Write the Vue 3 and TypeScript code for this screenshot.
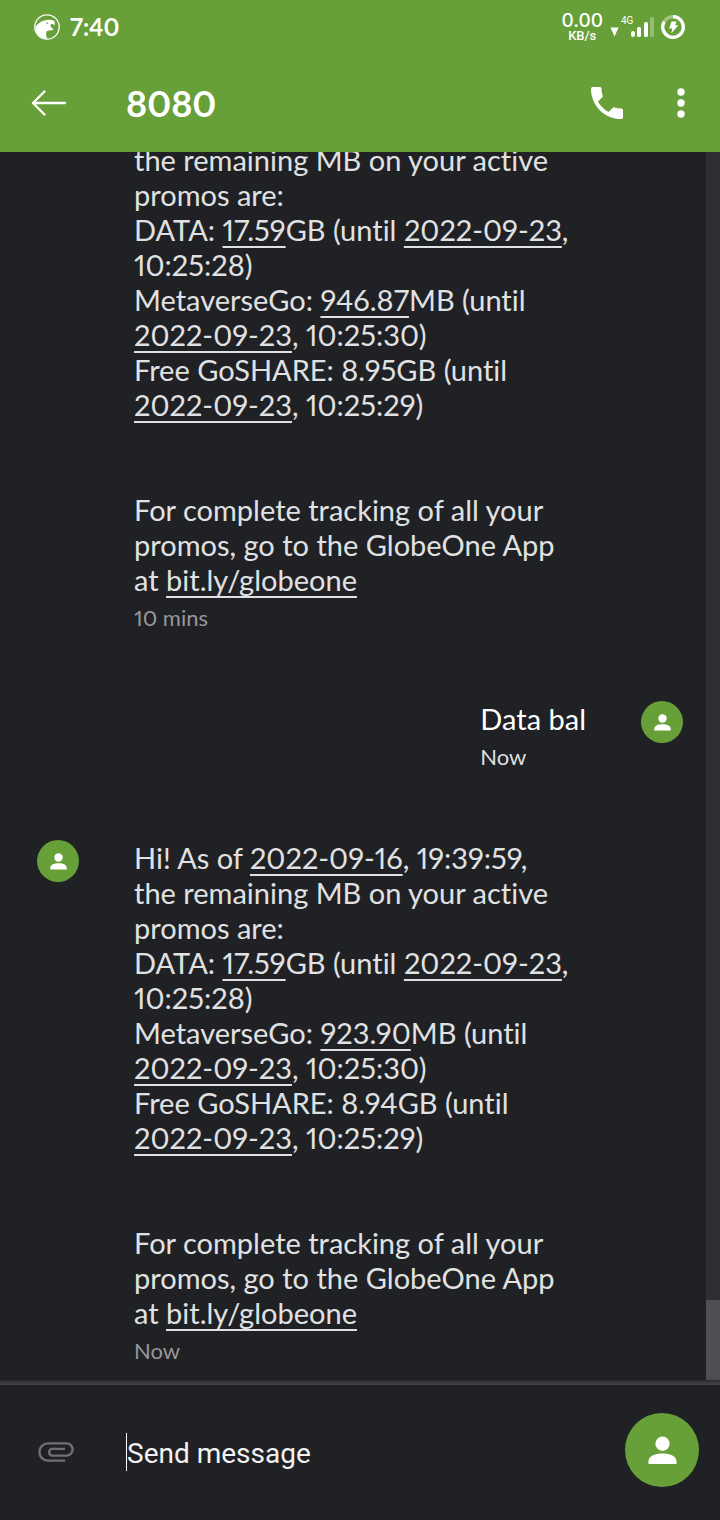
<script setup lang="ts">
import { ref } from 'vue'

interface Part {
  text: string
  href?: string
}
type Line = Part[]
interface Message {
  id: number
  outgoing: boolean
  lines: Line[]
  time: string
}

function balance(clock: string, meta: string, share: string): Line[] {
  const expiry: Part = { text: '2022-09-23', href: '#date' }
  return [
    [{ text: 'Hi! As of ' }, { text: '2022-09-16', href: '#date' }, { text: `, ${clock},` }],
    [{ text: 'the remaining MB on your active' }],
    [{ text: 'promos are:' }],
    [{ text: 'DATA: ' }, { text: '17.59', href: '#number' }, { text: 'GB (until ' }, expiry, { text: ',' }],
    [{ text: '10:25:28)' }],
    [{ text: 'MetaverseGo: ' }, { text: meta, href: '#number' }, { text: 'MB (until' }],
    [expiry, { text: ', 10:25:30)' }],
    [{ text: `Free GoSHARE: ${share}GB (until` }],
    [expiry, { text: ', 10:25:29)' }],
    [],
    [],
    [{ text: 'For complete tracking of all your' }],
    [{ text: 'promos, go to the GlobeOne App' }],
    [{ text: 'at ' }, { text: 'bit.ly/globeone', href: '#link' }],
  ]
}

const messages: Message[] = [
  { id: 1, outgoing: false, lines: balance('19:29:59', '946.87', '8.95'), time: '10 mins' },
  { id: 2, outgoing: true, lines: [[{ text: 'Data bal' }]], time: 'Now' },
  { id: 3, outgoing: false, lines: balance('19:39:59', '923.90', '8.94'), time: 'Now' },
]

const draft = ref('')
</script>

<template>
  <div class="app">
    <header class="header">
      <div class="status">
        <svg class="eagle" viewBox="0 0 26 26" aria-hidden="true">
          <circle cx="13" cy="13" r="12.2" fill="none" stroke="#fff" stroke-width="1.3" />
          <path d="M1.500 13C3 10.500 6 7.500 9.500 6.800C13 5.500 17 5.600 19.500 6.600C21 7.500 21.200 9.500 20.400 11.600C19.700 10.300 18.900 9.900 17.500 9.900L16.200 11.200L17.300 13.600L19.800 15.200L17.300 16.600C15.500 16.500 13.800 16.400 12.600 17.400C11.800 19.500 12 22.500 13.500 25C7 25.500 1.500 20 1.500 13Z" fill="#fff" />
          <path d="M11.500 8.300l3.300.6-1.700 1z" fill="#67a039" />
        </svg>
        <span class="clock">7:40</span>
        <span class="spacer"></span>
        <span class="speed"><b>0.00</b><small>KB/s</small></span>
        <svg class="down" viewBox="0 0 10 10" aria-hidden="true"><path d="M.5 0h9L5 10z" fill="#fff" /></svg>
        <span class="network">
          <span class="generation">4G</span>
          <svg class="signal" viewBox="0 0 24 22" aria-hidden="true">
            <rect x="0" y="15" width="4" height="6" rx="2" fill="#fff" />
            <rect x="6" y="11" width="4" height="10" rx="1.500" fill="#fff" />
            <rect x="13" y="6" width="4" height="15" rx="1.500" fill="#fff" />
            <rect x="19" y="1" width="4" height="20" rx="1.500" fill="#fff" opacity=".3" />
          </svg>
        </span>
        <svg class="battery" viewBox="0 0 24 24" aria-hidden="true">
          <circle cx="12" cy="12" r="10.300" fill="none" stroke="#fff" stroke-opacity=".4" stroke-width="3.200" />
          <path d="M12 1.700A10.300 10.300 0 1 1 3.200 6.700" fill="none" stroke="#fff" stroke-width="3.200" />
          <path d="M10.500 6.500h5.200l-1.600 3.800h3.200L10.300 18.500l1-4.900H8.200z" fill="#fff" />
        </svg>
      </div>
      <div class="toolbar">
        <button class="icon-button" type="button" aria-label="Back">
          <svg class="back" viewBox="0 0 36 28" aria-hidden="true">
            <path d="M34 14H2M13.500 2.500L2 14l11.500 11.500" fill="none" stroke="#fff" stroke-width="2.400" stroke-linecap="round" stroke-linejoin="round" />
          </svg>
        </button>
        <h1 class="title">8080</h1>
        <button class="icon-button" type="button" aria-label="Call">
          <svg class="phone" viewBox="0 0 32 32" aria-hidden="true">
            <path d="M1.700 0H9.200Q10.500 0 10.500 1.500C10.500 4 11 6.500 11.600 8.300Q12 9.500 11.100 10.400L7 14.500C9.400 18.900 13.100 22.600 17.500 25L21.600 20.900Q22.400 20 23.600 20.400C25.600 21.100 28 21.500 30.500 21.500Q32 21.500 32 23V30.300Q32 32 30.300 32C13.500 32 0 18.500 0 1.700Q0 0 1.700 0Z" fill="#fff" />
          </svg>
        </button>
        <button class="icon-button more-button" type="button" aria-label="More options">
          <svg class="more" viewBox="0 0 8 30" aria-hidden="true">
            <circle cx="4" cy="4" r="3.700" fill="#fff" />
            <circle cx="4" cy="15" r="3.700" fill="#fff" />
            <circle cx="4" cy="26" r="3.700" fill="#fff" />
          </svg>
        </button>
      </div>
    </header>

    <main class="thread">
      <article v-for="m in messages" :key="m.id" class="message" :class="{ outgoing: m.outgoing }">
        <span class="avatar">
          <svg class="person" viewBox="0 0 30 30" aria-hidden="true">
            <circle cx="15" cy="8" r="7.400" fill="#fff" />
            <path d="M.5 29V26C.5 20.500 8 18 15 18S29.500 20.500 29.500 26V29Z" fill="#fff" />
          </svg>
        </span>
        <div class="content">
          <div class="body">
            <div v-for="(line, n) in m.lines" :key="n" class="line"><template v-for="(p, i) in line" :key="i"><a v-if="p.href" :href="p.href">{{ p.text }}</a><span v-else>{{ p.text }}</span></template></div>
          </div>
          <time class="time">{{ m.time }}</time>
        </div>
      </article>
      <div class="track"><div class="thumb"></div></div>
    </main>

    <form class="composer" @submit.prevent>
      <button class="icon-button attach" type="button" aria-label="Attach">
        <svg class="clip" viewBox="0 0 36 20" aria-hidden="true">
          <path d="M27 18.600H10A8.600 8.600 0 0 1 10 1.400H28.500A6.100 6.100 0 0 1 28.500 13.600H13.500A3.600 3.600 0 0 1 13.500 6.900H27" fill="none" stroke="#707173" stroke-width="2.400" />
        </svg>
      </button>
      <input v-model="draft" class="draft" type="text" placeholder="Send message" aria-label="Send message" />
      <button class="send" type="submit" aria-label="Send">
        <svg class="person" viewBox="0 0 30 30" aria-hidden="true">
          <circle cx="15" cy="8" r="7.400" fill="#fff" />
          <path d="M.5 29V26C.5 20.500 8 18 15 18S29.500 20.500 29.500 26V29Z" fill="#fff" />
        </svg>
      </button>
    </form>
  </div>
</template>

<style>
body {
  margin: 0;
  background: #202125;
}
</style>

<style scoped>
.app {
  display: flex;
  flex-direction: column;
  height: 100vh;
  overflow: hidden;
  background: #202125;
  color: #e0e1e3;
  font-family: Lato, 'Open Sans', sans-serif;
  font-variant-ligatures: none;
  font-variant-numeric: proportional-nums;
}
.app * {
  box-sizing: border-box;
}
svg {
  display: block;
}
.header {
  flex: none;
  background: #67a039;
  color: #fff;
}
.status {
  display: flex;
  align-items: center;
  height: 54px;
  padding: 0 35px 0 34px;
}
.eagle {
  width: 26px;
  height: 26px;
}
.clock {
  margin-left: 10px;
  font-size: 24px;
  line-height: 28px;
  font-weight: 700;
}
.spacer {
  flex: 1;
}
.speed {
  display: flex;
  flex-direction: column;
  align-items: center;
  margin: 2px 7px 0 0;
  font-family: Inter, sans-serif;
}
.speed b {
  font-size: 19px;
  line-height: 16px;
  font-weight: 500;
}
.speed small {
  font-family: Roboto, sans-serif;
  font-size: 13px;
  line-height: 14px;
  font-weight: 500;
}
.down {
  width: 9px;
  height: 10px;
  margin-top: 10px;
}
.network {
  display: flex;
  align-items: flex-start;
  margin: 0 6px 0 2px;
}
.generation {
  width: 10px;
  white-space: nowrap;
  font-family: Roboto, sans-serif;
  font-size: 10px;
  line-height: 10px;
}
.signal {
  width: 24px;
  height: 22px;
}
.battery {
  width: 24px;
  height: 24px;
}
.toolbar {
  display: flex;
  align-items: center;
  height: 98px;
  padding: 0 35px 0 31px;
}
.icon-button {
  flex: none;
  padding: 0;
  border: 0;
  background: none;
}
.back {
  width: 36px;
  height: 28px;
}
.title {
  flex: 1;
  margin: 0 0 0 59px;
  font-size: 36px;
  line-height: 44px;
  font-weight: 700;
}
.phone {
  width: 32px;
  height: 32px;
}
.more-button {
  margin-left: 54px;
}
.more {
  width: 8px;
  height: 30px;
}
.thread {
  position: relative;
  flex: 1;
  min-height: 0;
  display: flex;
  flex-direction: column;
  justify-content: flex-end;
  gap: 69px;
  padding: 0 37px 15px;
  overflow: hidden;
}
.message {
  flex: none;
  display: flex;
  align-items: flex-start;
  gap: 55px;
}
.outgoing {
  flex-direction: row-reverse;
  color: #fff;
}
.avatar {
  flex: none;
  display: grid;
  place-items: center;
  width: 42px;
  height: 42px;
  border-radius: 50%;
  background: #67a039;
}
.avatar .person {
  width: 17px;
  height: 17px;
}
.line {
  min-height: 35px;
  white-space: pre-wrap;
  font-size: 29px;
  line-height: 35px;
}
.line a {
  color: inherit;
  text-decoration: underline;
  text-decoration-thickness: 2px;
  text-decoration-skip-ink: none;
  text-underline-offset: 5px;
}
.time {
  display: block;
  margin-top: 7px;
  font-size: 22px;
  line-height: 28px;
  color: #96979a;
}
.outgoing .time {
  color: #dedfe1;
}
.track {
  position: absolute;
  top: 0;
  right: 0;
  bottom: 0;
  width: 14px;
  display: flex;
  align-items: flex-end;
  background: #2e2f33;
}
.thumb {
  width: 100%;
  height: 80px;
  background: #4e4f51;
}
.composer {
  flex: none;
  display: flex;
  align-items: center;
  height: 140px;
  padding: 0 21px 0 38px;
  background: linear-gradient(#2a2b2e, #47484b) top / 100% 5px no-repeat;
}
.attach {
  margin-top: 4px;
}
.clip {
  width: 36px;
  height: 20px;
}
.draft {
  flex: 1;
  min-width: 0;
  height: 38px;
  margin: 4px 0 0 52px;
  padding: 2px 0 0;
  border: 0;
  border-left: 1px solid #fff;
  outline: 0;
  background: none;
  color: #fff;
  font-family: Roboto, sans-serif;
  font-size: 28px;
}
.draft::placeholder {
  color: #f2f2f3;
  opacity: 1;
}
.send {
  flex: none;
  display: grid;
  place-items: center;
  width: 74px;
  height: 74px;
  padding: 0;
  border: 0;
  border-radius: 50%;
  background: #67a039;
}
.send .person {
  width: 29px;
  height: 29px;
}
</style>
